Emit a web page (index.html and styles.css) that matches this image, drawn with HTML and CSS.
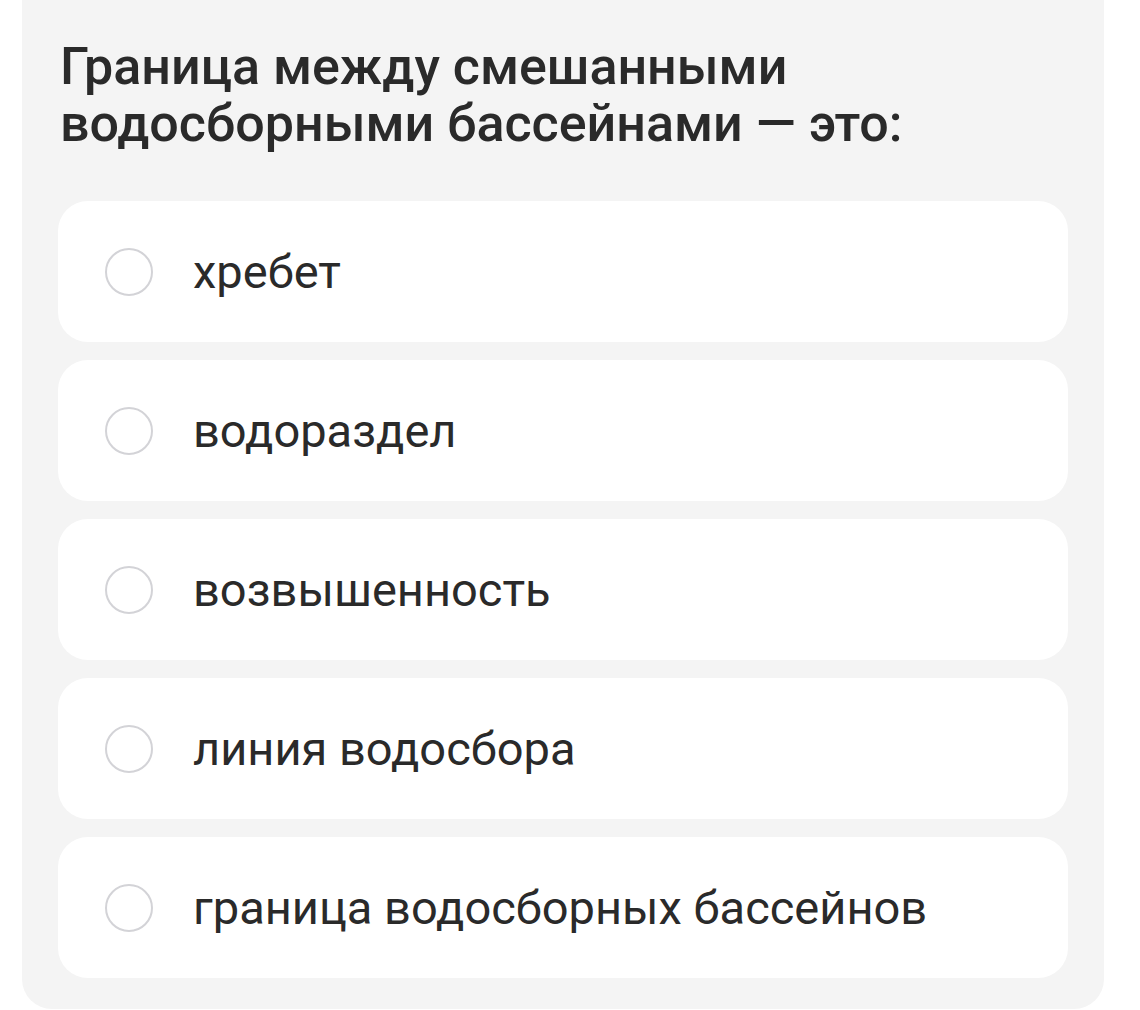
FILE: index.html
```html
<!DOCTYPE html>
<html lang="ru">
<head>
  <meta charset="UTF-8" />
  <meta name="viewport" content="width=device-width, initial-scale=1.0"/>
  <title>Вопрос</title>
  <link rel="stylesheet" href="styles.css">
</head>
<body>
  <div class="card">
    <h1 class="question">Граница между смешанными водосборными бассейнами — это:</h1>

    <div class="options">
      <label class="option"><span class="radio"></span><span class="option-text">хребет</span></label>
      <label class="option"><span class="radio"></span><span class="option-text">водораздел</span></label>
      <label class="option"><span class="radio"></span><span class="option-text">возвышенность</span></label>
      <label class="option"><span class="radio"></span><span class="option-text">линия водосбора</span></label>
      <label class="option"><span class="radio"></span><span class="option-text">граница водосборных бассейнов</span></label>
    </div>
  </div>
</body>
</html>
```

FILE: styles.css
```css
body {
  margin: 0;
  background: #fff;
  font-family: 'Roboto', 'Noto Sans', sans-serif;
  color: #2a2a2a;
}
.card {
  width: 1082px;
  margin-left: 22px;
  box-sizing: border-box;
  background: #f4f4f4;
  border-radius: 0 0 30px 30px;
  padding: 38px 36px 31px;
}
.question {
  margin: 0 0 49px 2px;
  width: 900px;
  font-size: 52px;
  font-weight: 500;
  line-height: 57px;
}
.options {
  display: flex;
  flex-direction: column;
  gap: 18px;
}
.option {
  display: flex;
  align-items: center;
  height: 141px;
  box-sizing: border-box;
  padding-left: 47px;
  background: #fff;
  border-radius: 30px;
  cursor: pointer;
}
.radio {
  width: 48px;
  height: 48px;
  box-sizing: border-box;
  border: 2.5px solid #d3d3d7;
  border-radius: 50%;
  flex-shrink: 0;
}
.option-text {
  margin-left: 40px;
  font-size: 47px;
  font-weight: 400;
}
```
